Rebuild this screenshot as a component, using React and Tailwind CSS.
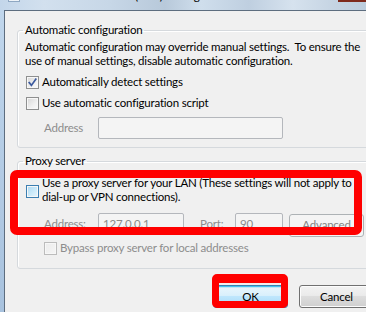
import React from "react";

function Box({ variant = "normal", checked = false }) {
  const styles = {
    normal:
      "border-[#8e8f8f] bg-[linear-gradient(135deg,#d6d6d6_0%,#f0f0f0_60%,#fbfbfb_100%)]",
    hover:
      "border-[#3c7fb1] bg-[linear-gradient(135deg,#a9d8f3_0%,#d0ecfa_60%,#eaf7fd_100%)]",
    disabled:
      "border-[#bcbcbc] bg-[linear-gradient(135deg,#ececec_0%,#f5f5f5_100%)]",
  };
  return (
    <span
      className={
        "relative flex shrink-0 items-center justify-center w-[13px] h-[13px] border shadow-[inset_0_0_0_1px_#f7f7f7] " +
        styles[variant]
      }
    >
      {checked && (
        <svg width="9" height="9" viewBox="0 0 9 9" className="block">
          <path
            d="M1.2 4.6 L3.4 7.4 L7.8 1.2"
            fill="none"
            stroke="#3c5a9e"
            strokeWidth="1.7"
            strokeLinecap="square"
          />
        </svg>
      )}
    </span>
  );
}

function Input({ w, value }) {
  return (
    <div
      className={
        "h-[22px] shrink-0 border border-[#b4b7bc] rounded-[2px] bg-[#f4f4f4] flex items-center pl-[4px] text-[#8a8a8a] " +
        w
      }
    >
      {value}
    </div>
  );
}

export default function App() {
  return (
    <div className="relative w-[366px] h-[312px] overflow-hidden bg-[#b9d1ea] font-['Lato',sans-serif] text-[11.5px] tracking-[-0.2px] leading-[14px] text-black">
      {/* title strip */}
      <div className="flex items-start h-[10px] overflow-hidden bg-[linear-gradient(90deg,#c3d6ea_0%,#d2e0ee_12%,#c7d7e7_30%,#b8c9da_45%,#cfdeec_55%,#bfcfe0_68%,#d6e2ee_80%,#c4d3e2_92%,#bccddd_100%)]">
        <div className="ml-[8px] mt-[-10px] w-[12px] h-[12px] bg-[#eef3f8] border border-[#8ea7c2]" />
        <div className="ml-[4px] mt-[-11px] w-[111px] shrink-0 whitespace-nowrap text-right">
          Local Area Network&nbsp;
        </div>
        <div className="mt-[-11px] whitespace-nowrap">(LAN) Settings</div>
        <div className="ml-auto w-[28px] h-[2px] bg-[#7e2a1c]" />
      </div>

      <div className="flex h-[302px]">
        <div className="w-[4px] shrink-0 bg-[linear-gradient(180deg,#c0d6ec,#a8c2de)]" />
        <div className="flex-1 overflow-hidden border-l border-t border-[#5d6d7f] bg-[#f0f0f0] pl-[12px]">
          {/* Automatic configuration */}
          <fieldset className="mt-[12px] w-[360px] border border-[#d5d9dd] rounded-[3px] pl-[7px] pb-[8px] shadow-[inset_1px_1px_0_#ffffff]">
            <legend className="ml-[-2px] px-[2px] leading-[14px]">
              Automatic configuration
            </legend>
            <p className="mt-[3px] whitespace-nowrap">
              Automatic configuration may override manual settings.&nbsp; To ensure the
              <br />
              use of manual settings, disable automatic configuration.
            </p>
            <div className="mt-[7px] h-[14px] flex items-center pl-[1px]">
              <Box checked />
              <span className="ml-[3px]">Automatically detect settings</span>
            </div>
            <div className="mt-[7px] h-[14px] flex items-center pl-[1px]">
              <Box />
              <span className="ml-[3px]">Use automatic configuration script</span>
            </div>
            <div className="mt-[7px] h-[22px] flex items-center">
              <span className="ml-[19px] w-[54px] shrink-0 text-[#8d8d8d]">Address</span>
              <Input w="w-[185px]" value="" />
            </div>
          </fieldset>

          {/* Proxy server */}
          <fieldset className="mt-[6px] w-[360px] border border-[#d5d9dd] rounded-[3px] pl-[7px] pb-[13px] shadow-[inset_1px_1px_0_#ffffff]">
            <legend className="ml-[-2px] px-[2px] leading-[14px]">Proxy server</legend>
            <div className="mt-[8px] flex items-start pl-[1px]">
              <div className="mt-[9px]">
                <Box variant="hover" />
              </div>
              <p className="ml-[3px] whitespace-nowrap">
                Use a proxy server for your LAN (These settings will not apply to
                <br />
                dial-up or VPN connections).
              </p>
            </div>
            <div className="mt-[9px] h-[22px] flex items-center">
              <span className="ml-[19px] w-[54px] shrink-0 text-[#8d8d8d]">Address:</span>
              <Input w="w-[86px]" value="127.0.0.1" />
              <span className="ml-[16px] w-[35px] shrink-0 text-[#8d8d8d]">Port:</span>
              <Input w="w-[48px]" value="90" />
              <div className="ml-[6px] mt-[2px] w-[75px] h-[23px] shrink-0 border border-[#adb2b5] rounded-[3px] bg-[#f4f4f4] flex items-center justify-center text-[#838383]">
                Advanced
              </div>
            </div>
            <div className="mt-[6px] h-[14px] flex items-center">
              <span className="ml-[19px]">
                <Box variant="disabled" />
              </span>
              <span className="ml-[3px] text-[#8d8d8d]">
                Bypass proxy server for local addresses
              </span>
            </div>
          </fieldset>

          {/* Buttons */}
          <div className="mt-[16px] flex pl-[196px]">
            <div className="w-[75px] h-[23px] shrink-0 rounded-[3px] border border-[#3c7fb1] bg-[linear-gradient(180deg,#eaf6fd_0%,#d9f0fc_45%,#bee6fd_50%,#a7d9f5_100%)] shadow-[inset_0_1px_0_#48c3f0,inset_0_0_0_2px_#c4e5f6] flex items-center justify-center">
              OK
            </div>
            <div className="ml-[11px] w-[75px] h-[23px] shrink-0 rounded-[3px] border border-[#707070] bg-[linear-gradient(180deg,#f2f2f2_0%,#ebebeb_45%,#dddddd_50%,#cfcfcf_100%)] shadow-[inset_0_0_0_1px_#fcfcfc] flex items-center justify-center">
              Cancel
            </div>
          </div>
        </div>
      </div>

      {/* red highlight overlays */}
      <div className="absolute left-[10px] top-[170px] w-[352px] h-[65px] border-[8px] border-[#ff0000] rounded-[7px]" />
      <div className="absolute left-[212px] top-[274px] w-[76px] h-[34px] border-[7px] border-t-[9px] border-[#ff0000] rounded-[5px]" />
    </div>
  );
}
